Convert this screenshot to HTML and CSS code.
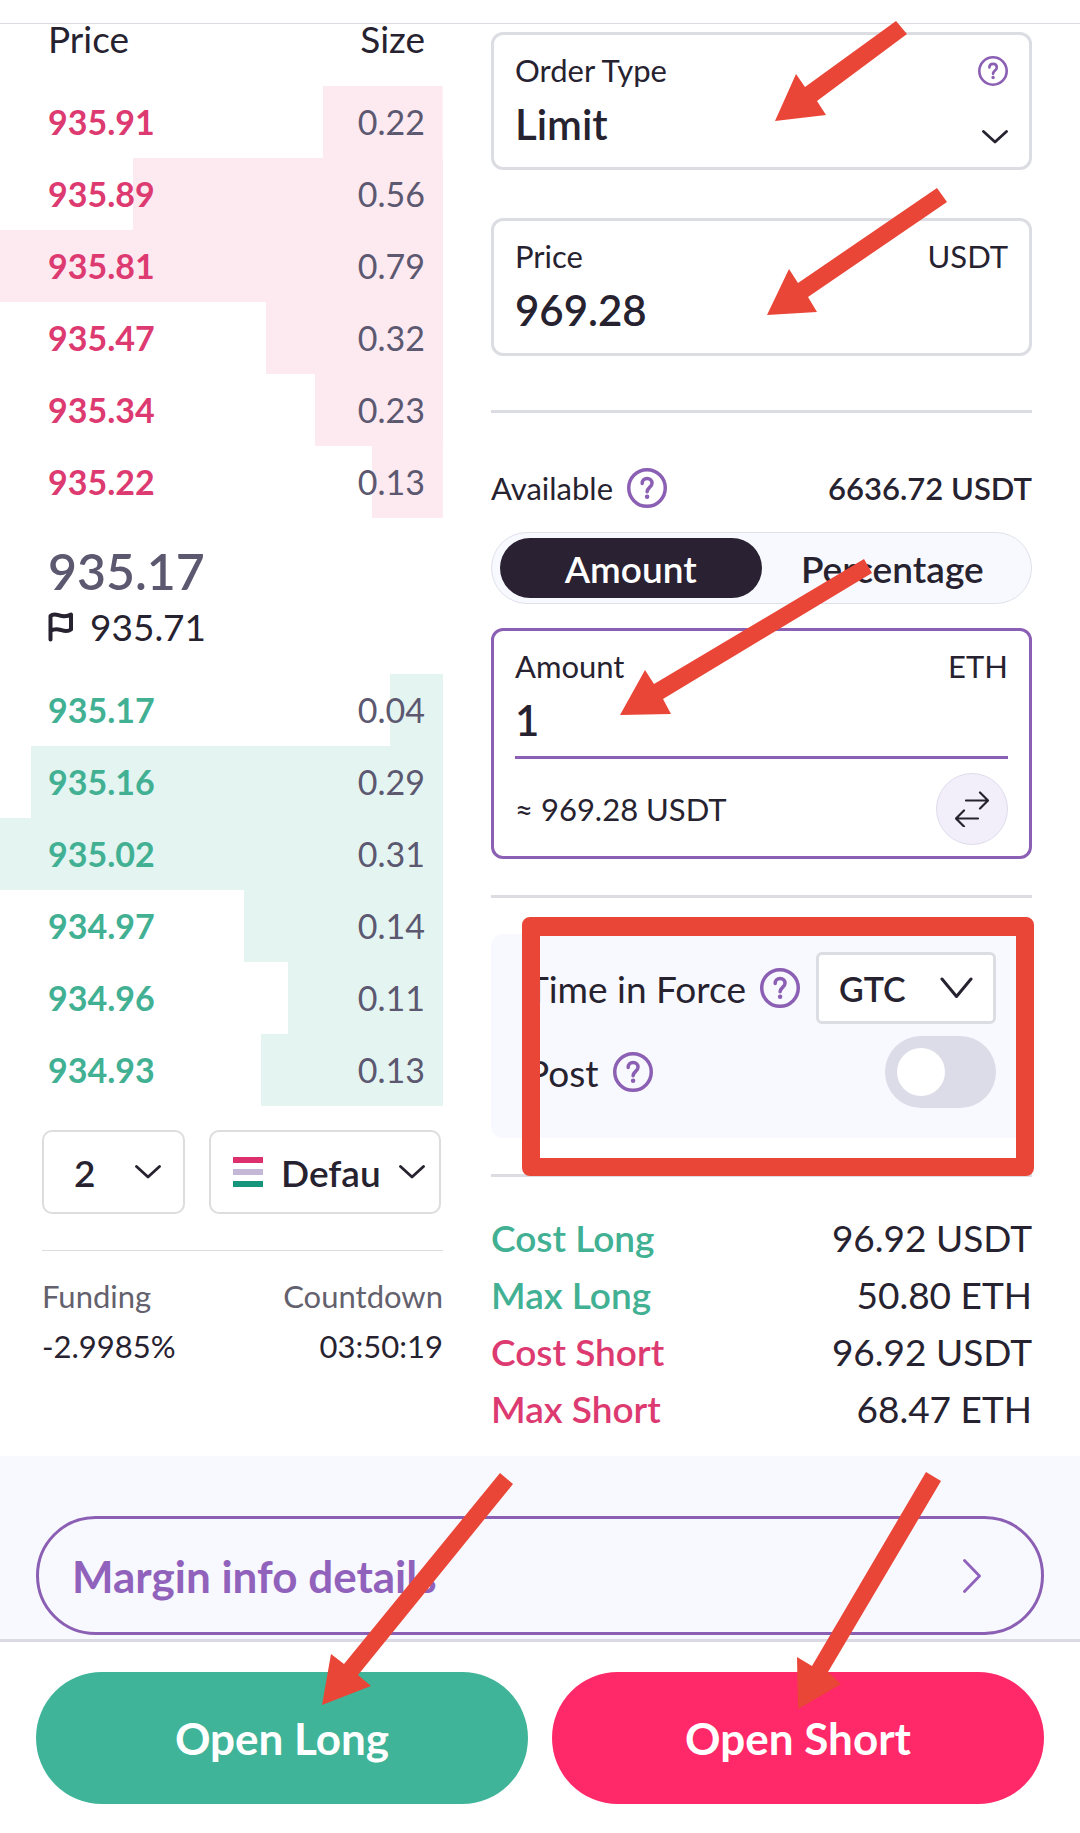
FILE: index.html
```html
<!DOCTYPE html>
<html lang="en">
<head>
<meta charset="utf-8">
<meta name="viewport" content="width=device-width, initial-scale=1">
<title>ETH / USDT order</title>
<link rel="stylesheet" href="styles.css">
</head>
<body>
<svg class="sprite" aria-hidden="true">
  <symbol id="help" viewBox="0 0 39 39">
    <circle cx="19.500" cy="19.500" r="17.800" fill="none" stroke="currentColor" stroke-width="3.400"/>
    <path d="M14.800 15c0-3 2-4.800 4.800-4.800s4.800 1.800 4.800 4.600c0 4-4.800 4.200-4.800 8.400" fill="none" stroke="currentColor" stroke-width="3.400" stroke-linecap="round"/>
    <circle cx="19.600" cy="28" r="2.200" fill="currentColor"/>
  </symbol>
  <symbol id="chevron" viewBox="0 0 26 14">
    <path d="M1.500 1.500 13 12 24.500 1.500" fill="none" stroke="currentColor" stroke-width="2.800" stroke-linecap="round" stroke-linejoin="round"/>
  </symbol>
  <symbol id="chevron-large" viewBox="0 0 33 22">
    <path d="M2 2 16.500 19.500 31 2" fill="none" stroke="currentColor" stroke-width="3" stroke-linecap="round" stroke-linejoin="round"/>
  </symbol>
</svg>

<header class="topbar"></header>

<main class="trade">
  <section class="book" aria-label="Order book">
    <table class="levels asks">
      <thead><tr><th scope="col">Price</th><th scope="col">Size</th></tr></thead>
      <tbody>
        <tr style="--depth:27%"><td>935.91</td><td>0.22</td></tr>
        <tr style="--depth:70%"><td>935.89</td><td>0.56</td></tr>
        <tr style="--depth:100%"><td>935.81</td><td>0.79</td></tr>
        <tr style="--depth:40%"><td>935.47</td><td>0.32</td></tr>
        <tr style="--depth:29%"><td>935.34</td><td>0.23</td></tr>
        <tr style="--depth:16%"><td>935.22</td><td>0.13</td></tr>
      </tbody>
    </table>

    <div class="ticker">
      <p class="last">935.17</p>
      <p class="mark">
        <svg class="flag" viewBox="0 0 26 30" aria-hidden="true"><path d="M2.500 27.500V4c4-4 8 0 11.500 0 3.500.500 6.500 0 9-1.500v15c-4 3-8 1-11 .200-3.500-.900-6.500-.700-9.500 1.300" fill="none" stroke="currentColor" stroke-width="4" stroke-linecap="round" stroke-linejoin="round"/></svg>
        <span>935.71</span>
      </p>
    </div>

    <table class="levels bids" aria-label="Bids">
      <tbody>
        <tr style="--depth:12%"><td>935.17</td><td>0.04</td></tr>
        <tr style="--depth:93%"><td>935.16</td><td>0.29</td></tr>
        <tr style="--depth:100%"><td>935.02</td><td>0.31</td></tr>
        <tr style="--depth:45%"><td>934.97</td><td>0.14</td></tr>
        <tr style="--depth:35%"><td>934.96</td><td>0.11</td></tr>
        <tr style="--depth:41%"><td>934.93</td><td>0.13</td></tr>
      </tbody>
    </table>

    <div class="book-controls">
      <div class="picker picker-decimals">
        <select aria-label="Decimals"><option>2</option></select>
        <svg class="chevron" aria-hidden="true"><use href="#chevron"/></svg>
      </div>
      <div class="picker picker-view">
        <svg class="bars" viewBox="0 0 30 30" aria-hidden="true"><path fill="#dc2f6c" d="M0 0h30v6H0z"/><path fill="#c5b7d6" d="M0 12h30v6H0z"/><path fill="#17957c" d="M0 24h30v6H0z"/></svg>
        <select aria-label="Book view"><option>Default</option></select>
        <svg class="chevron" aria-hidden="true"><use href="#chevron"/></svg>
      </div>
    </div>

    <dl class="funding">
      <div><dt>Funding</dt><dd>-2.9985%</dd></div>
      <div class="end"><dt>Countdown</dt><dd>03:50:19</dd></div>
    </dl>
  </section>

  <form class="order" id="order">
    <div class="field">
      <div class="field-head">
        <label for="type">Order Type</label>
        <button class="help help-small" type="button" aria-label="About order types"><svg aria-hidden="true"><use href="#help"/></svg></button>
      </div>
      <div class="picker picker-type">
        <select id="type"><option>Limit</option></select>
        <svg class="chevron" aria-hidden="true"><use href="#chevron"/></svg>
      </div>
    </div>

    <div class="field field-price">
      <div class="field-head"><label for="price">Price</label><span class="unit">USDT</span></div>
      <input class="value" id="price" type="text" inputmode="decimal" value="969.28">
    </div>

    <div class="available">
      <span class="labelled">Available <button class="help" type="button" aria-label="About available balance"><svg aria-hidden="true"><use href="#help"/></svg></button></span>
      <strong>6636.72 USDT</strong>
    </div>

    <div class="segments">
      <button class="segment active" type="button" aria-pressed="true">Amount</button>
      <button class="segment" type="button" aria-pressed="false">Percentage</button>
    </div>

    <div class="field field-active">
      <div class="field-head"><label for="amount">Amount</label><span class="unit">ETH</span></div>
      <input class="value underlined" id="amount" type="text" inputmode="decimal" value="1">
      <div class="convert">
        <span>≈ 969.28 USDT</span>
        <button class="swap" type="button" aria-label="Switch currency">
          <svg viewBox="0 0 34 36" aria-hidden="true"><path d="M11 9.500h22M25 1.500l8 8-8 8M23 27.500H1M9 19.500l-8 8 8 8" fill="none" stroke="currentColor" stroke-width="2.200" stroke-linecap="round" stroke-linejoin="round"/></svg>
        </button>
      </div>
    </div>

    <div class="options">
      <div class="option">
        <span class="labelled"><label for="tif">Time in Force</label> <button class="help" type="button" aria-label="About time in force"><svg aria-hidden="true"><use href="#help"/></svg></button></span>
        <div class="picker picker-tif">
          <select id="tif"><option>GTC</option></select>
          <svg class="chevron chevron-large" aria-hidden="true"><use href="#chevron-large"/></svg>
        </div>
      </div>
      <div class="option">
        <span class="labelled"><label for="post">Post</label> <button class="help" type="button" aria-label="About post only"><svg aria-hidden="true"><use href="#help"/></svg></button></span>
        <input class="switch" id="post" type="checkbox" role="switch">
      </div>
    </div>

    <dl class="costs">
      <div class="long"><dt>Cost Long</dt><dd>96.92 USDT</dd></div>
      <div class="long"><dt>Max Long</dt><dd>50.80 ETH</dd></div>
      <div class="short"><dt>Cost Short</dt><dd>96.92 USDT</dd></div>
      <div class="short"><dt>Max Short</dt><dd>68.47 ETH</dd></div>
    </dl>
  </form>
</main>

<section class="margin">
  <button class="margin-button" type="button">
    Margin info details
    <svg viewBox="0 0 18 34" aria-hidden="true"><path d="M1.500 1.500 16.500 17 1.500 32.500" fill="none" stroke="currentColor" stroke-width="2.800" stroke-linecap="round" stroke-linejoin="round"/></svg>
  </button>
</section>

<footer class="actions">
  <button class="action action-long" type="submit" form="order">Open Long</button>
  <button class="action action-short" type="submit" form="order">Open Short</button>
</footer>

<svg class="notes" viewBox="0 0 1080 1833" aria-hidden="true">
  <path d="M896 21 907 34 817 101 826 115 775 121 796 74 805 87z"/>
  <path d="M937 188 947 202 808 297 817 312 767 315 789 269 798 283z"/>
  <path d="M864 559 872 573 663 699 671 714 620 715 645 670 654 684z"/>
  <path d="M500 1473 513 1484 358 1675 371 1686 322 1705 331 1654 344 1664z"/>
  <path d="M926 1472 941 1481 828 1672 841 1684 798 1709 797 1657 812 1666z"/>
  <path fill-rule="evenodd" d="M530 917H1026a8 8 0 0 1 8 8V1168a8 8 0 0 1-8 8H530a8 8 0 0 1-8-8V925a8 8 0 0 1 8-8zM540 936V1158H1016V936z"/>
</svg>
</body>
</html>
```
FILE: styles.css
```css
:root {
  --ink: #27222f;
  --slate: #5b5870;
  --purple: #8b5fb3;
  --green: #3fb498;
  --green-text: #41b093;
  --pink: #ff2868;
  --pink-text: #dc3a70;
  --line: #dcdde3;
  --panel: #f8f9fe;
}

* { box-sizing: border-box; }

body {
  position: relative;
  margin: 0;
  background: #fff;
  color: var(--ink);
  font-family: Lato, "Noto Sans", sans-serif;
  font-size: 37px;
}

p, dl, dd { margin: 0; }

button, input, select {
  margin: 0;
  padding: 0;
  border: 0;
  background: none;
  color: inherit;
  font: inherit;
}

select { appearance: none; cursor: pointer; }

.sprite { position: absolute; width: 0; height: 0; }

.topbar { height: 24px; border-bottom: 1px solid var(--line); }

.trade {
  display: grid;
  grid-template-columns: minmax(0, 443fr) minmax(0, 541fr);
  column-gap: 48px;
  padding-right: 48px;
}

/* Order book */
.levels {
  width: 100%;
  border-collapse: collapse;
  font-size: 34px;
  line-height: 72px;
}

.levels th, .levels td { padding: 0; text-align: left; }
.levels th { padding-bottom: 32px; font-size: 37px; font-weight: 400; line-height: 30px; }
.levels :is(th, td):first-child { padding-left: 48px; }
.levels :is(th, td):last-child { padding-right: 18px; text-align: right; }
.levels td:first-child { font-weight: 700; }
.levels td:last-child { color: var(--slate); }

.levels tbody tr {
  background: linear-gradient(var(--bar), var(--bar)) right / var(--depth) 100% no-repeat;
}

.asks { --bar: #fde9f0; }
.asks td:first-child { color: var(--pink-text); }
.bids { --bar: #e4f4f1; }
.bids td:first-child { color: var(--green-text); }

.ticker { padding: 25px 48px 19px; line-height: 56px; }
.last { color: var(--slate); font-size: 50px; font-weight: 600; }
.mark { display: flex; align-items: center; gap: 16px; }
.flag { width: 26px; height: 30px; }

.book-controls {
  display: grid;
  grid-template-columns: minmax(0, 143fr) minmax(0, 232fr);
  gap: 24px;
  padding: 24px 2px 36px 42px;
}

.picker {
  position: relative;
  display: flex;
  align-items: center;
  font-size: 37px;
  font-weight: 600;
}

.picker select { width: 100%; height: 100%; }

.chevron {
  position: absolute;
  right: 14px;
  width: 26px;
  height: 14px;
  pointer-events: none;
}

.chevron-large { width: 33px; height: 22px; }

.picker-decimals, .picker-view {
  height: 84px;
  border: 2px solid #ddd;
  border-radius: 10px;
}

.picker-decimals select { padding-left: 30px; }
.picker-decimals .chevron { right: 22px; }
.picker-view { padding-right: 58px; }
.picker-view select { padding-left: 70px; }
.bars { position: absolute; left: 22px; width: 30px; height: 30px; pointer-events: none; }

.funding {
  display: flex;
  justify-content: space-between;
  margin-left: 42px;
  padding-top: 20px;
  border-top: 1px solid #ddd;
  font-size: 31px;
  line-height: 50px;
}

.funding dt { color: #63616d; }
.end { text-align: right; }

/* Order form */
.order { padding: 8px 0 19px; }

.field {
  padding: 17px 21px 11px;
  border: 3px solid var(--line);
  border-radius: 12px;
}

.field-active { margin-top: 24px; border-color: var(--purple); }
.field-price { margin-top: 48px; }

.field-head {
  display: flex;
  justify-content: space-between;
  height: 40px;
  font-size: 31px;
  line-height: 36px;
}

.value { display: block; width: 100%; height: 64px; font-size: 42px; font-weight: 600; }
.underlined { height: 71px; padding-bottom: 4px; border-bottom: 3px solid var(--purple); }

.picker-type { height: 64px; font-size: 42px; }
.picker-type .chevron { right: 0; bottom: 12px; }

.help { display: block; width: 40px; height: 40px; color: var(--purple); }
.help svg { display: block; width: 100%; height: 100%; }
.help-small { width: 30px; height: 30px; margin-top: 4px; }

.available {
  display: flex;
  justify-content: space-between;
  margin-top: 54px;
  padding: 55px 0 24px;
  border-top: 3px solid var(--line);
  font-size: 31px;
  line-height: 40px;
}

.available strong { font-weight: 600; }
.labelled { display: flex; align-items: center; gap: 14px; }

.segments {
  display: grid;
  grid-template-columns: 1fr 1fr;
  padding: 5px 8px;
  border: 1px solid #dfe0ea;
  border-radius: 36px;
  background: var(--panel);
}

.segment { height: 60px; border-radius: 30px; font-weight: 600; }
.active { background: #2a2133; color: #fff; }

.convert {
  display: flex;
  align-items: center;
  justify-content: space-between;
  padding-top: 14px;
  font-size: 31px;
}

.swap {
  display: grid;
  place-items: center;
  width: 72px;
  height: 72px;
  border: 1px solid #dfdcec;
  border-radius: 50%;
  background: #f2effb;
}

.swap svg { width: 34px; height: 36px; }

.options {
  position: relative;
  display: grid;
  gap: 12px;
  margin: 75px 0 36px;
  padding: 18px 36px 30px;
  border-radius: 12px;
  background: var(--panel);
}

.options::before {
  content: "";
  position: absolute;
  inset: -39px 0 auto;
  border-top: 3px solid var(--line);
}

.option { display: flex; align-items: center; justify-content: space-between; height: 72px; }

.picker-tif {
  width: 180px;
  height: 72px;
  border: 3px solid var(--line);
  border-radius: 6px;
  background: #fff;
  font-size: 34px;
}

.picker-tif select { padding-left: 20px; }
.picker-tif .chevron { right: 20px; }

.switch {
  appearance: none;
  display: flex;
  align-items: center;
  width: 111px;
  height: 72px;
  padding: 0 12px;
  border-radius: 36px;
  background: #dcdbe8;
  cursor: pointer;
}

.switch::before { content: ""; width: 48px; height: 48px; border-radius: 50%; background: #fff; }
.switch:checked { justify-content: flex-end; background: var(--purple); }

.costs { padding-top: 32px; border-top: 3px solid var(--line); line-height: 57px; }
.costs div { display: flex; justify-content: space-between; }
.costs dt { font-weight: 600; }
.long dt { color: var(--green-text); }
.short dt { color: var(--pink-text); }

/* Footer */
.margin { padding: 60px 36px 4px; border-bottom: 3px solid #d9dae3; background: var(--panel); }

.margin-button {
  display: flex;
  align-items: center;
  justify-content: space-between;
  width: 100%;
  height: 119px;
  padding: 0 60px 0 33px;
  border: 3px solid var(--purple);
  border-radius: 60px;
  color: #9062bc;
  font-size: 44px;
  font-weight: 700;
}

.margin-button svg { width: 18px; height: 34px; }

.actions { display: grid; grid-template-columns: 1fr 1fr; gap: 24px; padding: 30px 36px 29px; }
.action { height: 132px; border-radius: 66px; color: #fff; font-size: 44px; font-weight: 700; }
.action-long { background: var(--green); }
.action-short { background: var(--pink); }

/* Annotation layer */
.notes { position: absolute; inset: 0; width: 100%; height: 100%; fill: #e94637; pointer-events: none; }
```
